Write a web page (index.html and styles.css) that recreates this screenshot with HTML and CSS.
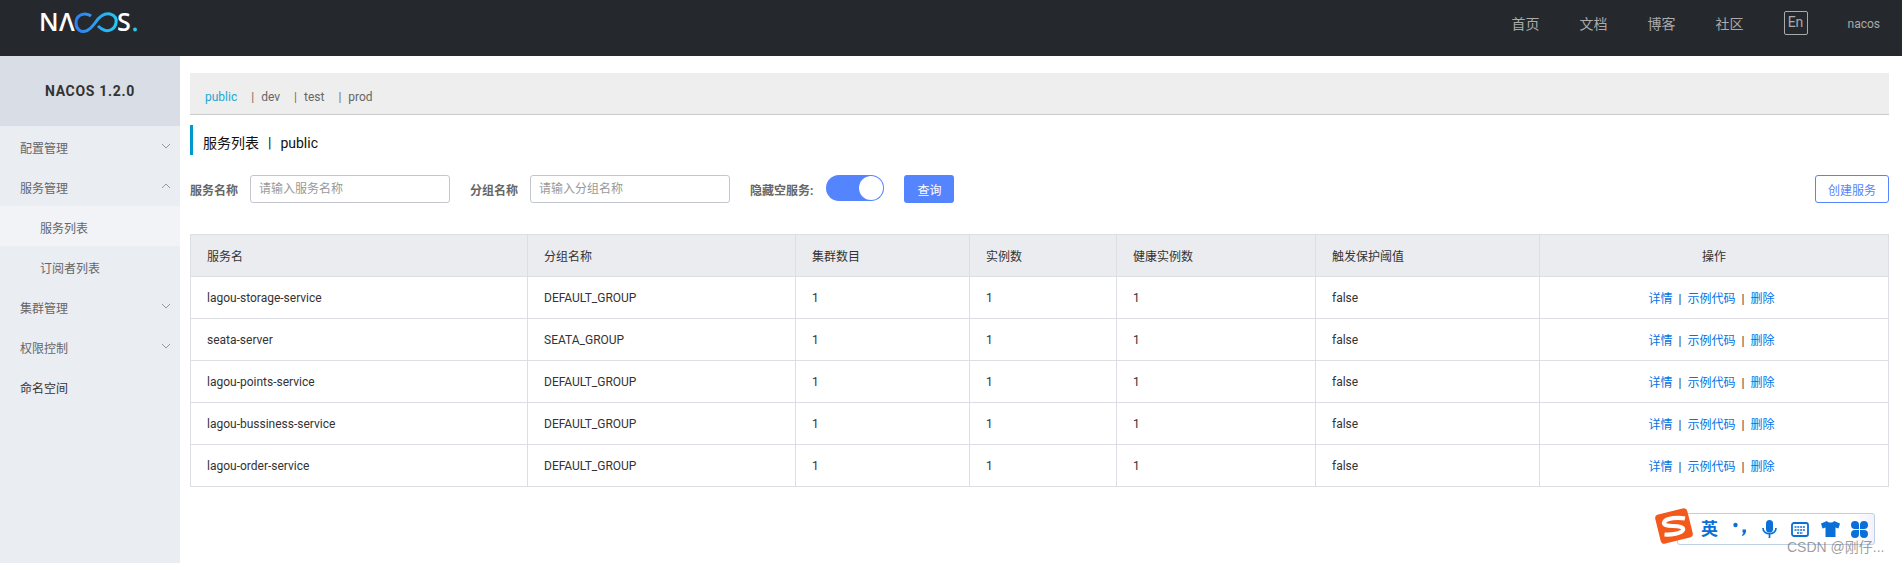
FILE: index.html
```html
<!DOCTYPE html>
<html lang="zh-CN">
<head>
    <meta charset="UTF-8">
    <title>Nacos</title>
    <link rel="stylesheet" href="styles.css">
</head>
<body>

    <header class="topbar">
        <svg class="logo" width="100" height="36" viewBox="0 0 100 36" role="img" aria-label="NACOS">
            <defs>
                <linearGradient id="loopGrad" x1="0" x2="1" y1="0" y2="0">
                    <stop offset="0" stop-color="#2f7cf0"/>
                    <stop offset="1" stop-color="#25c9f0"/>
                </linearGradient>
            </defs>
            <text class="logo-text" x="0" y="28">N</text>
            <text class="logo-text" x="20" y="28">Λ</text>
            <path d="M52 13 C49 10.500 43 10 40 13 C36 16 36 24 40 27 C45 31 51 27 56 20 C60 14 65 10 71 11 C76 12 78 16 77 20 C76 26 70 29 65 27 C62 26 60 24 59 23" fill="none" stroke="url(#loopGrad)" stroke-width="3"/>
            <text class="logo-text" x="78" y="28">S</text>
            <circle cx="96" cy="26.500" r="1.900" fill="#25c9f0"/>
        </svg>
        <nav class="topnav">
            <a>首页</a>
            <a>文档</a>
            <a>博客</a>
            <a>社区</a>
            <span class="lang-btn">En</span>
            <span class="user">nacos</span>
        </nav>
    </header>

    <div class="main">
        <aside class="sidebar">
            <div class="side-title">NACOS 1.2.0</div>
            <ul class="side-menu">
                <li class="side-item">配置管理
                    <svg class="chev" width="10" height="6" viewBox="0 0 10 6"><path d="M1 1l4 4 4-4"/></svg>
                </li>
                <li class="side-item">服务管理
                    <svg class="chev" width="10" height="6" viewBox="0 0 10 6"><path d="M1 5l4-4 4 4"/></svg>
                </li>
                <li class="side-item sub active">服务列表</li>
                <li class="side-item sub">订阅者列表</li>
                <li class="side-item">集群管理
                    <svg class="chev" width="10" height="6" viewBox="0 0 10 6"><path d="M1 1l4 4 4-4"/></svg>
                </li>
                <li class="side-item">权限控制
                    <svg class="chev" width="10" height="6" viewBox="0 0 10 6"><path d="M1 1l4 4 4-4"/></svg>
                </li>
                <li class="side-item plain">命名空间</li>
            </ul>
        </aside>

        <main class="content">
            <div class="ns-bar">
                <span class="ns current">public</span>
                <span class="ns"><i>|</i>dev</span>
                <span class="ns"><i>|</i>test</span>
                <span class="ns"><i>|</i>prod</span>
            </div>

            <h1 class="page-title">服务列表<i>|</i>public</h1>

            <form class="search-row">
                <label class="field-label">服务名称</label>
                <input class="text-input" type="text" placeholder="请输入服务名称">
                <label class="field-label second">分组名称</label>
                <input class="text-input" type="text" placeholder="请输入分组名称">
                <label class="field-label third">隐藏空服务:</label>
                <span class="switch"><span class="knob"></span></span>
                <button type="button" class="btn primary">查询</button>
                <button type="button" class="btn outline">创建服务</button>
            </form>

            <table class="svc-table">
                <colgroup>
                    <col class="c1"><col class="c2"><col class="c3"><col class="c4"><col class="c5"><col class="c6"><col>
                </colgroup>
                <thead>
                    <tr>
                        <th>服务名</th>
                        <th>分组名称</th>
                        <th>集群数目</th>
                        <th>实例数</th>
                        <th>健康实例数</th>
                        <th>触发保护阈值</th>
                        <th class="center">操作</th>
                    </tr>
                </thead>
                <tbody>
                    <tr>
                        <td>lagou-storage-service</td><td>DEFAULT_GROUP</td><td>1</td><td>1</td><td>1</td><td>false</td>
                        <td class="center actions"><a>详情</a><i>|</i><a>示例代码</a><i>|</i><a>删除</a></td>
                    </tr>
                    <tr>
                        <td>seata-server</td><td>SEATA_GROUP</td><td>1</td><td>1</td><td>1</td><td>false</td>
                        <td class="center actions"><a>详情</a><i>|</i><a>示例代码</a><i>|</i><a>删除</a></td>
                    </tr>
                    <tr>
                        <td>lagou-points-service</td><td>DEFAULT_GROUP</td><td>1</td><td>1</td><td>1</td><td>false</td>
                        <td class="center actions"><a>详情</a><i>|</i><a>示例代码</a><i>|</i><a>删除</a></td>
                    </tr>
                    <tr>
                        <td>lagou-bussiness-service</td><td>DEFAULT_GROUP</td><td>1</td><td>1</td><td>1</td><td>false</td>
                        <td class="center actions"><a>详情</a><i>|</i><a>示例代码</a><i>|</i><a>删除</a></td>
                    </tr>
                    <tr>
                        <td>lagou-order-service</td><td>DEFAULT_GROUP</td><td>1</td><td>1</td><td>1</td><td>false</td>
                        <td class="center actions"><a>详情</a><i>|</i><a>示例代码</a><i>|</i><a>删除</a></td>
                    </tr>
                </tbody>
            </table>
        </main>
    </div>

    <!-- input method bar floating over the page -->
    <div class="ime-bar">
        <svg class="ime-logo" width="40" height="38" viewBox="0 0 40 38">
            <rect x="3.500" y="4" width="33" height="30" rx="4" transform="rotate(-14 20 19)" fill="#f4591c"/>
            <path d="M31 11.500 C24 10 13 11 10.500 14.500 C8.500 18 13 19 19 19 C25 19 30 20 29 23 C27.500 26.500 17 28 10.500 27.500" fill="none" stroke="#fff" stroke-width="4.200"/>
        </svg>
        <span class="ime-lang">英</span>
        <span class="ime-punct">
            <svg width="14" height="14" viewBox="0 0 14 14" fill="#0a6fd6"><circle cx="2.500" cy="3" r="2.200"/><path d="M9.500 7.500h3.500c.5 3-1 5.500-3.500 6.500l-.7-1c1-.6 1.500-1.500 1.600-2.500H9.500z"/></svg>
        </span>
        <svg class="ime-mic" width="15" height="19" viewBox="0 0 15 19"><rect x="4" y="0" width="7" height="12.500" rx="3.500" fill="#0a6fd6"/><path d="M1 8c0 7.500 13 7.500 13 0M7.500 14v4" fill="none" stroke="#0a6fd6" stroke-width="1.700"/></svg>
        <svg class="ime-keys" width="18" height="15" viewBox="0 0 18 15"><rect x="1" y="1" width="16" height="13" rx="2" fill="none" stroke="#0a6fd6" stroke-width="1.800"/><path d="M3.500 5h11M3.500 8h11M6 11h6" stroke="#0a6fd6" stroke-width="1.700" stroke-dasharray="2 .8"/></svg>
        <svg class="ime-shirt" width="19" height="16" viewBox="0 0 19 16"><path d="M6 0L0 2.500l1.500 5 3-1V16h10V6.500l3 1 1.500-5L13 0c-1 2-6 2-7 0z" fill="#0a6fd6"/></svg>
        <svg class="ime-clover" width="17" height="17" viewBox="0 0 17 17" fill="#0a6fd6"><path d="M4 0a4 4 0 0 1 4 4v4H4a4 4 0 0 1 0-8zM13 0a4 4 0 0 1 0 8H9V4a4 4 0 0 1 4-4zM4 9h4v4a4 4 0 1 1-4-4zM9 9h4a4 4 0 1 1-4 4z"/></svg>
    </div>
    <div class="watermark">CSDN @刚仔...</div>

</body>
</html>
```

FILE: styles.css
```css
* {
    box-sizing: border-box;
}
html, body {
    height: 100%;
}
body {
    margin: 0;
    font-family: Roboto, "Noto Sans CJK SC", sans-serif;
    font-size: 12px;
    color: #333;
    background: #fff;
    overflow: hidden;
}
i {
    font-style: normal;
}

/* top bar */
.topbar {
    height: 56px;
    background: #25292e;
    display: flex;
    justify-content: space-between;
    padding-left: 39px;
}
.logo {
    margin-top: 3px;
}
.logo-text {
    font-family: "Open Sans", sans-serif;
    font-size: 25px;
    font-weight: 600;
    fill: #fff;
}
.topnav {
    display: flex;
    align-items: center;
    color: #aaa;
    font-size: 14px;
    padding: 0 22px 10px 0;
}
.topnav a {
    width: 68px;
    text-align: center;
}
.lang-btn {
    width: 24px;
    height: 24px;
    margin-left: 20px;
    border: 1px solid #aaa;
    border-radius: 2px;
    font-size: 14px;
    line-height: 20px;
    text-align: center;
}
.user {
    margin: 2px 0 0 40px;
    font-size: 12px;
}

.main {
    display: flex;
    height: calc(100% - 56px);
}

/* left menu */
.sidebar {
    width: 180px;
    flex: none;
    background: #eaedf2;
}
.side-title {
    height: 70px;
    background: #d9dde5;
    font-size: 14px;
    font-weight: 700;
    letter-spacing: 0.7px;
    line-height: 70px;
    text-align: center;
    color: #333;
}
.side-menu {
    list-style: none;
    margin: 0;
    padding: 0;
}
.side-item {
    height: 40px;
    line-height: 46px;
    padding-left: 20px;
    position: relative;
    color: #666;
}
.side-item.sub {
    padding-left: 40px;
}
.side-item.active {
    background: #f2f3f7;
}
.side-item.plain {
    color: #333;
}
.chev {
    position: absolute;
    right: 9px;
    top: 17px;
}
.chev path {
    fill: none;
    stroke: #999;
    stroke-width: 1;
}

/* page body */
.content {
    flex: 1;
    padding: 17px 13px 0 10px;
}
.ns-bar {
    height: 42px;
    background: #eee;
    border-bottom: 1px solid #ccc;
    padding-left: 15px;
    line-height: 49px;
    display: flex;
    color: #666;
}
.ns {
    margin-right: 14px;
}
.ns i {
    color: #7a6a5a;
    margin-right: 7px;
}
.ns.current {
    color: #1aa9d4;
}
.page-title {
    margin: 10px 0 0;
    height: 30px;
    border-left: 3px solid #09c;
    padding-left: 10px;
    font-size: 14px;
    font-weight: 400;
    line-height: 36px;
    color: #111;
}
.page-title i {
    margin: 0 9px;
}

.search-row {
    display: flex;
    align-items: center;
    margin-top: 20px;
    height: 28px;
}
.field-label {
    font-weight: 700;
    color: #666;
    margin-right: 12px;
}
.field-label.second {
    margin-left: 20px;
}
.field-label.third {
    margin-left: 20px;
    margin-right: 13px;
}
.text-input {
    width: 200px;
    height: 28px;
    border: 1px solid #c4c6cf;
    border-radius: 3px;
    padding: 0 8px;
    font: inherit;
    outline: none;
}
.text-input::placeholder {
    color: #999;
}
.switch {
    width: 58px;
    height: 26px;
    border-radius: 13px;
    background: #5584ff;
    margin-top: -2px;
    padding: 1px;
    display: flex;
    justify-content: flex-end;
}
.knob {
    width: 24px;
    height: 24px;
    border-radius: 50%;
    background: #fff;
}
.btn {
    height: 28px;
    border-radius: 3px;
    font: inherit;
    cursor: pointer;
}
.btn.primary {
    width: 50px;
    margin-left: 20px;
    background: #5584ff;
    border: none;
    color: #fff;
}
.btn.outline {
    width: 74px;
    margin-left: auto;
    background: #fff;
    border: 1px solid #5584ff;
    color: #5584ff;
}

/* service table */
.svc-table {
    width: 100%;
    margin-top: 31px;
    border-collapse: collapse;
    table-layout: fixed;
}
.c1 { width: 337px; }
.c2 { width: 268px; }
.c3 { width: 174px; }
.c4 { width: 147px; }
.c5 { width: 199px; }
.c6 { width: 224px; }
.svc-table th, .svc-table td {
    height: 42px;
    border: 1px solid #dcdee3;
    padding: 0 16px;
    text-align: left;
    font-weight: 400;
}
.svc-table th {
    background: #ebecf0;
}
.svc-table .center {
    text-align: center;
}
.svc-table td.actions {
    padding-right: 21px;
}
.svc-table a {
    color: #0073e6;
}
.svc-table td i {
    margin: 0 6px;
}

/* floating stuff */
.ime-bar {
    position: absolute;
    left: 1677px;
    top: 513px;
    width: 198px;
    height: 32px;
    background: linear-gradient(90deg, #fff 90%, #f5f0fb);
    border: 1px solid #bcd0e8;
    border-radius: 3px;
    display: flex;
    align-items: center;
    padding-left: 23px;
}
.ime-logo {
    position: absolute;
    left: -24px;
    top: -7px;
}
.ime-lang {
    font-size: 17px;
    font-weight: 700;
    color: #0a6fd6;
    line-height: 17px;
}
.ime-punct {
    display: flex;
    margin-left: 15px;
}
.ime-mic {
    margin-left: 15px;
}
.ime-keys {
    margin-left: 14px;
}
.ime-shirt {
    margin-left: 12px;
}
.ime-clover {
    margin-left: 11px;
}
.watermark {
    position: absolute;
    left: 1787px;
    top: 536px;
    font-family: "Liberation Sans", "Noto Sans CJK SC", sans-serif;
    font-size: 14px;
    color: rgba(90, 90, 90, 0.6);
}
```
